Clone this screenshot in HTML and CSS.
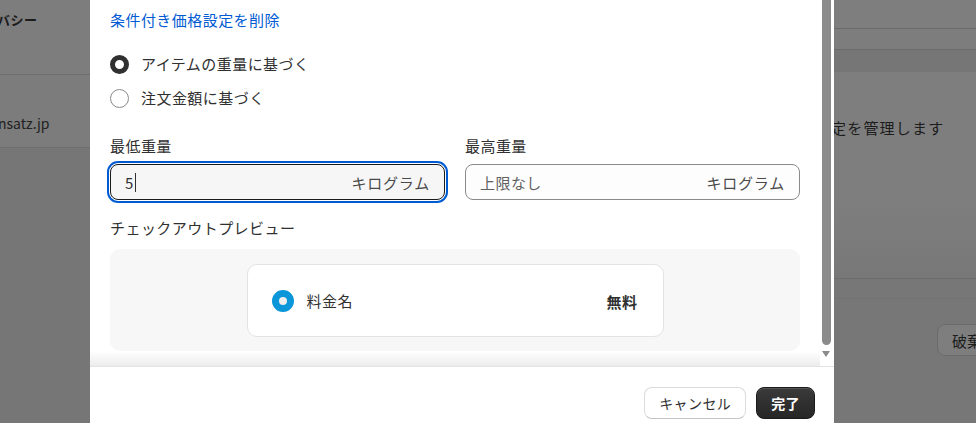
FILE: index.html
```html
<!DOCTYPE html>
<html lang="ja">
<head>
    <meta charset="UTF-8">
    <meta name="viewport" content="width=device-width, initial-scale=1.0">
    <title>条件付き価格設定</title>
    <link rel="stylesheet" href="styles.css">
</head>
<body>
    <div class="page">
        <aside class="bg-left">
            <div class="bg-left-top"><span class="bg-title">バシー</span></div>
            <div class="bg-left-row"><span class="bg-domain">nsatz.jp</span></div>
            <div class="bg-left-rest"></div>
        </aside>

        <div class="modal">
            <div class="modal-body">
                <div class="modal-scroll">
                    <a class="remove-link" href="#">条件付き価格設定を削除</a>

                    <div class="radio-group">
                        <label class="radio-row"><span class="radio radio-on"></span>アイテムの重量に基づく</label>
                        <label class="radio-row"><span class="radio"></span>注文金額に基づく</label>
                    </div>

                    <div class="fields">
                        <div class="field">
                            <div class="field-label">最低重量</div>
                            <div class="input input-focus">
                                <span class="input-value">5<span class="caret"></span></span>
                                <span class="input-suffix">キログラム</span>
                            </div>
                        </div>
                        <div class="field">
                            <div class="field-label">最高重量</div>
                            <div class="input">
                                <span class="input-placeholder">上限なし</span>
                                <span class="input-suffix">キログラム</span>
                            </div>
                        </div>
                    </div>

                    <div class="preview-label">チェックアウトプレビュー</div>
                    <div class="preview">
                        <div class="preview-card">
                            <span class="preview-radio"></span>
                            <span class="rate-name">料金名</span>
                            <span class="rate-price">無料</span>
                        </div>
                    </div>
                    <div class="scroll-fade"></div>
                </div>
                <div class="scrollbar">
                    <div class="scroll-thumb"></div>
                    <div class="scroll-arrow"></div>
                </div>
            </div>

            <div class="modal-footer">
                <button type="button" class="btn">キャンセル</button>
                <button type="button" class="btn btn-primary">完了</button>
            </div>
        </div>

        <aside class="bg-right">
            <div class="bg-right-top"></div>
            <div class="bg-right-row"></div>
            <div class="bg-right-band"></div>
            <div class="bg-right-text"><span class="bg-manage">定を管理します</span></div>
            <div class="bg-right-fade"></div>
            <div class="bg-right-bottom">
                <div class="bg-right-line"></div>
                <button type="button" class="bg-btn">破棄</button>
            </div>
        </aside>
    </div>
</body>
</html>
```

FILE: styles.css
```css
/* Page + dimmed background */
body {
    margin: 0;
    font-family: "Noto Sans CJK JP", "Noto Sans", sans-serif;
    font-size: 15px;
    letter-spacing: 0.45px;
    color: #303030;
    background-color: #7c7c7c;
}
.page {
    display: flex;
    height: 423px;
    overflow: hidden;
}

.bg-left {
    width: 90px;
    flex-shrink: 0;
    display: flex;
    flex-direction: column;
    color: #1c1c1c;
    overflow: hidden;
}
.bg-left-top {
    height: 75px;
    border-bottom: 1px solid #6e6e6e;
    background-color: #7d7d7d;
    box-sizing: border-box;
}
.bg-title {
    display: block;
    margin-top: 10px;
    margin-left: -3px;
    font-size: 13px;
    line-height: 20px;
    font-weight: 600;
    white-space: nowrap;
}
.bg-left-row {
    height: 73px;
    border-bottom: 1px solid #6f6f6f;
    background-color: #7c7c7c;
    box-sizing: border-box;
}
.bg-domain {
    display: block;
    margin-top: 38px;
    margin-left: -2px;
    font-size: 14px;
    letter-spacing: 0;
    line-height: 20px;
    color: #222;
}
.bg-left-rest {
    flex: 1;
    background-color: #767676;
}

.bg-right {
    flex: 1;
    display: flex;
    flex-direction: column;
    overflow: hidden;
    color: #1c1c1c;
}
.bg-right-top {
    height: 28px;
    border-bottom: 1px solid #6b6b6b;
    background-color: #7e7e7e;
}
.bg-right-row {
    height: 20px;
    border-bottom: 1px solid #6b6b6b;
    background-color: #7d7d7d;
}
.bg-right-band {
    height: 22px;
    background-color: #767676;
}
.bg-right-text {
    height: 128px;
    background-color: #7e7e7e;
}
.bg-manage {
    display: block;
    margin-top: 46px;
    margin-left: -3px;
    font-size: 15px;
    letter-spacing: 1.2px;
    line-height: 20px;
    white-space: nowrap;
}
.bg-right-fade {
    height: 78px;
    background: linear-gradient(#7e7e7e, #787878);
}
.bg-right-bottom {
    flex: 1;
    background-color: #777;
    border-top: 1px solid #6c6c6c;
}
.bg-right-line {
    height: 19px;
    border-bottom: 1px solid #727272;
}
.bg-btn {
    margin: 25px 0 0 103px;
    height: 32px;
    padding: 0 14px;
    border: 1px solid #6a6a6a;
    border-radius: 8px;
    background-color: #7e7e7e;
    font-family: inherit;
    font-size: 15px;
    color: #1c1c1c;
    white-space: nowrap;
}

/* Modal */
.modal {
    width: 744px;
    flex-shrink: 0;
    background-color: #fff;
    display: flex;
    flex-direction: column;
}
.modal-body {
    height: 366px;
    display: flex;
}
.modal-scroll {
    flex: 1;
    padding: 10px 20px 0;
}
.remove-link {
    display: block;
    line-height: 20px;
    color: #005bd3;
    text-decoration: none;
}

.radio-group {
    margin-top: 24px;
    display: flex;
    flex-direction: column;
    gap: 14px;
}
.radio-row {
    display: flex;
    align-items: center;
    gap: 12px;
    line-height: 20px;
}
.radio {
    width: 19px;
    height: 19px;
    border: 1px solid #8a8a8a;
    border-radius: 50%;
    box-sizing: border-box;
    background-color: #fff;
}
.radio-on {
    border: 5.5px solid #303030;
}

.fields {
    margin-top: 28px;
    display: grid;
    grid-template-columns: 1fr 1fr;
    gap: 20px;
}
.field-label {
    line-height: 20px;
    margin-bottom: 8px;
}
.input {
    height: 36px;
    box-sizing: border-box;
    border: 1px solid #8a8a8a;
    border-radius: 8px;
    background-color: #fdfdfd;
    display: flex;
    align-items: center;
    justify-content: space-between;
    padding: 0 14px;
}
.input-focus {
    border-color: #1a1a1a;
    background-color: #f6f6f6;
    outline: 2px solid #005bd3;
    outline-offset: 1px;
}
.input-value {
    display: flex;
    align-items: center;
    color: #303030;
}
.caret {
    width: 1px;
    height: 19px;
    margin-left: 1px;
    background-color: #303030;
}
.input-placeholder {
    color: #616161;
}
.input-suffix {
    color: #4a4a4a;
    letter-spacing: 0.8px;
}

.preview-label {
    margin-top: 18px;
    line-height: 20px;
}
.preview {
    margin-top: 11px;
    padding: 15px 15px 14px;
    background-color: #f7f7f7;
    border-radius: 10px;
    display: flex;
    justify-content: center;
}
.preview-card {
    width: 417px;
    box-sizing: border-box;
    padding: 25px 25px 24px 24px;
    background-color: #fff;
    border: 1px solid #e3e3e3;
    border-radius: 10px;
    display: flex;
    align-items: center;
}
.preview-radio {
    width: 22px;
    height: 22px;
    border-radius: 50%;
    box-sizing: border-box;
    border: 7px solid #0a96d8;
    background-color: #eee;
}
.rate-name {
    margin-left: 13px;
    flex: 1;
    line-height: 22px;
}
.rate-price {
    font-weight: 700;
    color: #303030;
}
.scroll-fade {
    height: 15px;
    margin: 0 -20px;
    background: linear-gradient(#fff, #ececec);
}

.scrollbar {
    width: 14px;
    display: flex;
    flex-direction: column;
    align-items: flex-start;
    background-color: #fff;
}
.scroll-thumb {
    width: 9px;
    height: 345px;
    margin-left: 2px;
    background-color: #8b8b8b;
    border-radius: 0 0 5px 5px;
}
.scroll-arrow {
    margin: 6px 0 0 2px;
    width: 0;
    height: 0;
    border-left: 4.5px solid transparent;
    border-right: 4.5px solid transparent;
    border-top: 6px solid #8b8b8b;
}

.modal-footer {
    border-top: 1px solid #e3e3e3;
    padding: 20px 19px 0 0;
    display: flex;
    justify-content: flex-end;
    gap: 10px;
}
.btn {
    height: 32px;
    padding: 0 14px;
    font-family: inherit;
    font-size: 14px;
    letter-spacing: 0.4px;
    color: #303030;
    background-color: #fff;
    border: 1px solid #dcdcdc;
    border-bottom-color: #c4c4c4;
    border-radius: 8px;
    cursor: pointer;
}
.btn-primary {
    padding: 0 14px;
    color: #fff;
    font-weight: 700;
    background: linear-gradient(#3a3a3a, #262626);
    border: 1px solid #1a1a1a;
    box-shadow: inset 0 1px 0 #555;
}
```
